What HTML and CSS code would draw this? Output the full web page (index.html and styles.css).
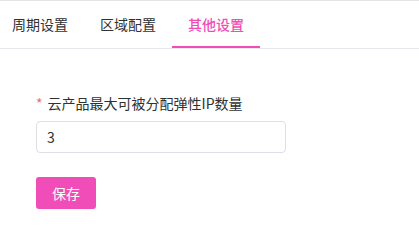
FILE: index.html
```html
<!DOCTYPE html>
<html lang="zh">
<head>
<meta charset="utf-8">
<link rel="stylesheet" href="styles.css">
</head>
<body>
<div class="page">
  <nav class="tabs">
    <div class="tab">周期设置</div>
    <div class="tab">区域配置</div>
    <div class="tab active">其他设置</div>
  </nav>
  <form class="form">
    <label class="label"><span class="req">*</span>云产品最大可被分配弹性IP数量</label>
    <input class="input" type="text" value="3">
    <button class="btn" type="button">保存</button>
  </form>
</div>
</body>
</html>
```
FILE: styles.css
```css
html, body {
  margin: 0;
  padding: 0;
  background: #fff;
}
.page {
  width: 419px;
  height: 231px;
  box-sizing: border-box;
  border-top: 1px solid #e4e4e4;
  font-family: "Noto Sans CJK SC", "Noto Sans", sans-serif;
  font-size: 14px;
  color: #303133;
}
.tabs {
  display: flex;
  gap: 32px;
  padding-left: 12px;
  height: 47px;
  border-bottom: 1px solid #e4e7ed;
}
.tab {
  position: relative;
  line-height: 47px;
  color: #303133;
}
.tab.active {
  color: #f04db8;
  font-weight: 500;
}
.tab.active::after {
  content: "";
  position: absolute;
  left: -16px;
  right: -16px;
  bottom: 0;
  height: 2px;
  background: #f04db8;
}
.form {
  display: flex;
  flex-direction: column;
  align-items: flex-start;
  padding: 44px 0 0 36px;
}
.label {
  line-height: 20px;
  color: #303133;
}
.req {
  color: #f56c6c;
  margin-right: 5px;
}
.input {
  margin-top: 8px;
  width: 250px;
  height: 32px;
  box-sizing: border-box;
  border: 1px solid #dcdfe6;
  border-radius: 4px;
  padding: 0 10px;
  font-family: "Noto Sans CJK SC", "Noto Sans", sans-serif;
  font-size: 14px;
  color: #303133;
  outline: none;
}
.btn {
  margin-top: 24px;
  width: 60px;
  height: 32px;
  border: none;
  border-radius: 3px;
  background: #f04db8;
  color: #fff;
  font-family: "Noto Sans CJK SC", "Noto Sans", sans-serif;
  font-size: 14px;
  padding: 0;
}
```
